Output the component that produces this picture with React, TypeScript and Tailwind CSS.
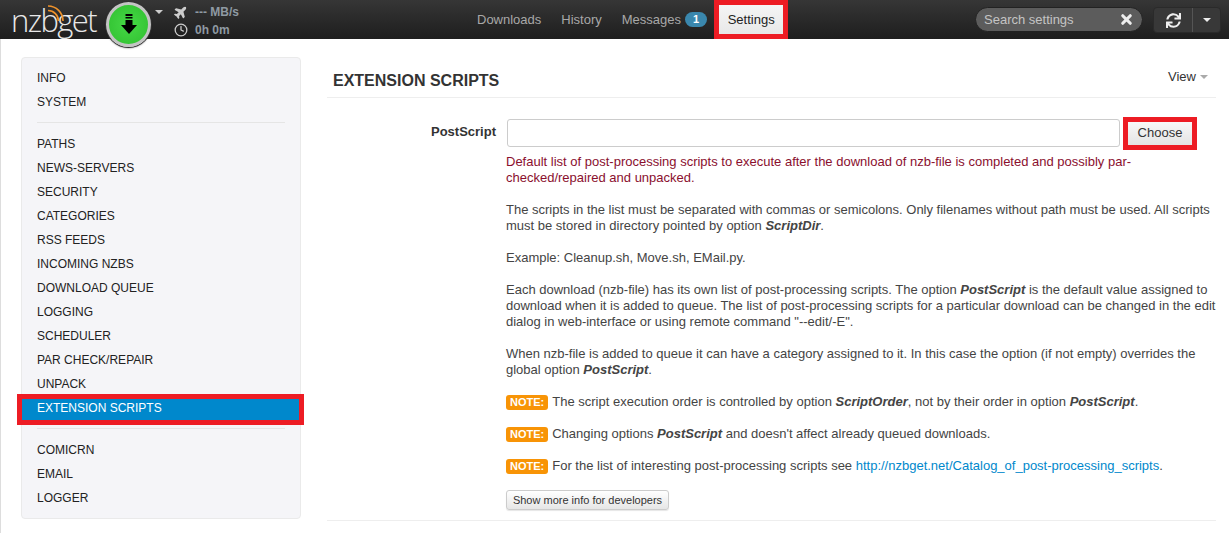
import { Clock, X } from 'lucide-react';
import { FaPlane, FaSync } from 'react-icons/fa';

const group1 = ['INFO', 'SYSTEM'];
const group2 = ['PATHS', 'NEWS-SERVERS', 'SECURITY', 'CATEGORIES', 'RSS FEEDS', 'INCOMING NZBS', 'DOWNLOAD QUEUE', 'LOGGING', 'SCHEDULER', 'PAR CHECK/REPAIR', 'UNPACK'];
const group3 = ['COMICRN', 'EMAIL', 'LOGGER'];

function Caret({ className }: { className: string }) {
  return <span className={`inline-block h-0 w-0 border-x-[4px] border-t-[4px] border-x-transparent ${className}`}></span>;
}

function NavItem({ label }: { label: string }) {
  return <div className="h-6 pl-[15px] text-[12px] leading-6 text-[#222]">{label}</div>;
}

function Divider() {
  return <div className="mx-[15px] mt-[8px] mb-[9px] h-px bg-[#e5e5e5]"></div>;
}

function Note() {
  return <span className="mr-[4px] inline-block h-[15px] rounded-[3px] bg-[#f89406] px-[4px] align-[0px] text-[11px] leading-[15px] font-bold text-white">NOTE:</span>;
}

function Header() {
  return (
    <header className="flex h-[39px] items-start bg-gradient-to-b from-[#363636] to-[#1e1e1e]">
      <div className="flex w-[467px] shrink-0 items-start">
        <div className="relative mt-[2px] ml-[11px] w-[94px] shrink-0 whitespace-nowrap text-[31px] leading-[36px] font-light tracking-[-1.6px] text-[#e8e8e8] [font-family:'Open_Sans',sans-serif]">
          nzbget
          <svg className="absolute top-[2px] left-[36px]" width="18" height="18" viewBox="0 0 18 18" fill="none" stroke="#f0932b" strokeWidth="1.6">
            <path d="M1 2a15 15 0 0 1 15 15" />
            <path d="M1 6.5a10.5 10.5 0 0 1 10.5 10.5" />
          </svg>
        </div>
        <div className="relative mt-[2px] ml-px flex h-[45px] w-[45px] items-center justify-center rounded-full border-[3px] border-[#c4c4c4] bg-[radial-gradient(circle,#46d846,#2fbf2f)] shadow-[0_1px_2px_rgba(0,0,0,0.6)] ring-1 ring-[#333]">
          <svg width="16" height="22" viewBox="0 0 16 22" fill="#000">
            <rect x="4.5" y="0" width="7" height="2" />
            <rect x="4.5" y="3" width="7" height="1.5" />
            <rect x="4.5" y="6" width="7" height="5" />
            <path d="M0 11h16l-8 9z" />
          </svg>
        </div>
        <Caret className="mt-[10px] ml-[4px] border-t-[#ccc]" />
        <div className="ml-[11px] flex flex-col text-[12px] font-bold text-[#8f9aa3]">
          <div className="mt-[3px] flex h-[18px] items-center gap-[7px]">
            <FaPlane size={14} className="-rotate-45 text-[#ccc]" />
            <span>--- MB/s</span>
          </div>
          <div className="flex h-[18px] items-center gap-[7px]">
            <Clock size={14} strokeWidth={2.2} className="text-[#ccc]" />
            <span>0h 0m</span>
          </div>
        </div>
      </div>

      <nav className="flex h-[39px] items-center text-[13px] text-[#a8a8a8]">
        <span className="px-[10px]">Downloads</span>
        <span className="px-[10px]">History</span>
        <span className="flex items-center gap-[4px] pr-[7px] pl-[10px]">
          Messages
          <span className="h-[15px] rounded-full bg-[#3a87ad] px-[8px] text-[11px] leading-[15px] font-bold text-white">1</span>
        </span>
        <span className="box-border flex h-[39px] w-[74px] items-center justify-center border-[5px] border-[#ed1c24] bg-gradient-to-b from-[#f5f5f5] to-[#e8e8e8] text-[#222]">Settings</span>
      </nav>

      <div className="mt-[7px] ml-auto flex items-start">
        <div className="flex h-[25px] w-[168px] items-center justify-between rounded-full border border-[#222] bg-[#5c5c5c] pr-[8px] pl-[8px] text-[13px] text-[#c4c4c4]">
          <span>Search settings</span>
          <X size={15} strokeWidth={5} className="text-[#eee]" />
        </div>
        <div className="mr-[8px] ml-[10px] flex h-[26px] w-[68px] rounded-[4px] border border-[#2a2a2a] bg-[#383838]">
          <div className="flex w-[39px] items-center justify-center border-r border-[#555]">
            <FaSync size={15} className="text-[#eee]" />
          </div>
          <div className="flex flex-1 items-center justify-center">
            <Caret className="border-t-[#eee]" />
          </div>
        </div>
      </div>
    </header>
  );
}

function Sidebar() {
  return (
    <aside className="mt-[18px] ml-[20px] h-[462px] w-[280px] shrink-0 rounded-[4px] border border-[#eaeaea] bg-[#f5f5f8] py-[8px]">
      {group1.map(l => <NavItem key={l} label={l} />)}
      <Divider />
      {group2.map(l => <NavItem key={l} label={l} />)}
      <div className="relative h-6 pl-[15px] text-[12px] leading-6 text-white">
        <div className="absolute top-[-2px] right-[-4px] bottom-[-5px] left-[-5px] border-[5px] border-[#ed1c24] bg-[#0088cc]"></div>
        <span className="relative">EXTENSION SCRIPTS</span>
      </div>
      <Divider />
      {group3.map(l => <NavItem key={l} label={l} />)}
    </aside>
  );
}

function Content() {
  return (
    <main className="mt-[18px] mr-[13px] ml-[26px] min-w-0 flex-1">
      <div className="flex h-[41px] items-start justify-between border-b border-[#eee] pr-[8px] pl-[6px]">
        <h2 className="mt-[14px] text-[16px] leading-[20px] font-bold text-[#333]">EXTENSION SCRIPTS</h2>
        <span className="mt-[12px] flex items-center gap-[4px] text-[13px] leading-[16px] text-[#333]">View <Caret className="border-t-[#aaa]" /></span>
      </div>

      <div className="flex items-start border-b border-[#eee] pt-[19px] pb-[10px] text-[13px] leading-[16px] text-[#444]">
        <div className="w-[179px] shrink-0 pt-[7px] pr-[10px] text-right font-bold text-[#333]">PostScript</div>
        <div className="min-w-0 flex-1">
          <div className="flex items-start">
            <div className="mt-[2px] ml-px h-[28px] w-[613px] rounded-[3px] border border-[#ccc] bg-white"></div>
            <div className="ml-[3px] box-border flex h-[33px] w-[74px] items-center justify-center border-[5px] border-[#ed1c24] bg-gradient-to-b from-[#f8f8f8] to-[#e4e4e4] pb-[1px] text-[#333]">Choose</div>
          </div>
          <div className="mt-[4px] whitespace-nowrap text-[#8a0f2e]">Default list of post-processing scripts to execute after the download of nzb-file is completed and possibly par-<br />checked/repaired and unpacked.</div>
          <p className="mt-[16px] whitespace-nowrap">The scripts in the list must be separated with commas or semicolons. Only filenames without path must be used. All scripts<br />must be stored in directory pointed by option <b><i>ScriptDir</i></b>.</p>
          <p className="mt-[16px]">Example: Cleanup.sh, Move.sh, EMail.py.</p>
          <p className="mt-[16px] whitespace-nowrap">Each download (nzb-file) has its own list of post-processing scripts. The option <b><i>PostScript</i></b> is the default value assigned to<br />download when it is added to queue. The list of post-processing scripts for a particular download can be changed in the edit<br />dialog in web-interface or using remote command "--edit/-E".</p>
          <p className="mt-[16px] whitespace-nowrap">When nzb-file is added to queue it can have a category assigned to it. In this case the option (if not empty) overrides the<br />global option <b><i>PostScript</i></b>.</p>
          <p className="mt-[16px]"><Note />The script execution order is controlled by option <b><i>ScriptOrder</i></b>, not by their order in option <b><i>PostScript</i></b>.</p>
          <p className="mt-[16px]"><Note />Changing options <b><i>PostScript</i></b> and doesn't affect already queued downloads.</p>
          <p className="mt-[16px]"><Note />For the list of interesting post-processing scripts see <span className="text-[#0088cc]">http://nzbget.net/Catalog_of_post-processing_scripts</span>.</p>
          <div className="mt-[16px] flex h-[20px] w-[163px] items-center justify-center rounded-[3px] border border-[#ccc] bg-gradient-to-b from-white to-[#e6e6e6] text-[11px] text-[#333] shadow-[0_1px_1px_rgba(0,0,0,0.1)]">Show more info for developers</div>
        </div>
      </div>
    </main>
  );
}

export default function App() {
  return (
    <div className="relative h-[533px] w-[1229px] overflow-hidden bg-white [font-family:'Liberation_Sans',Arial,sans-serif]">
      <Header />
      <div className="flex h-[494px] border-l border-[#ddd]">
        <Sidebar />
        <Content />
      </div>
    </div>
  );
}
